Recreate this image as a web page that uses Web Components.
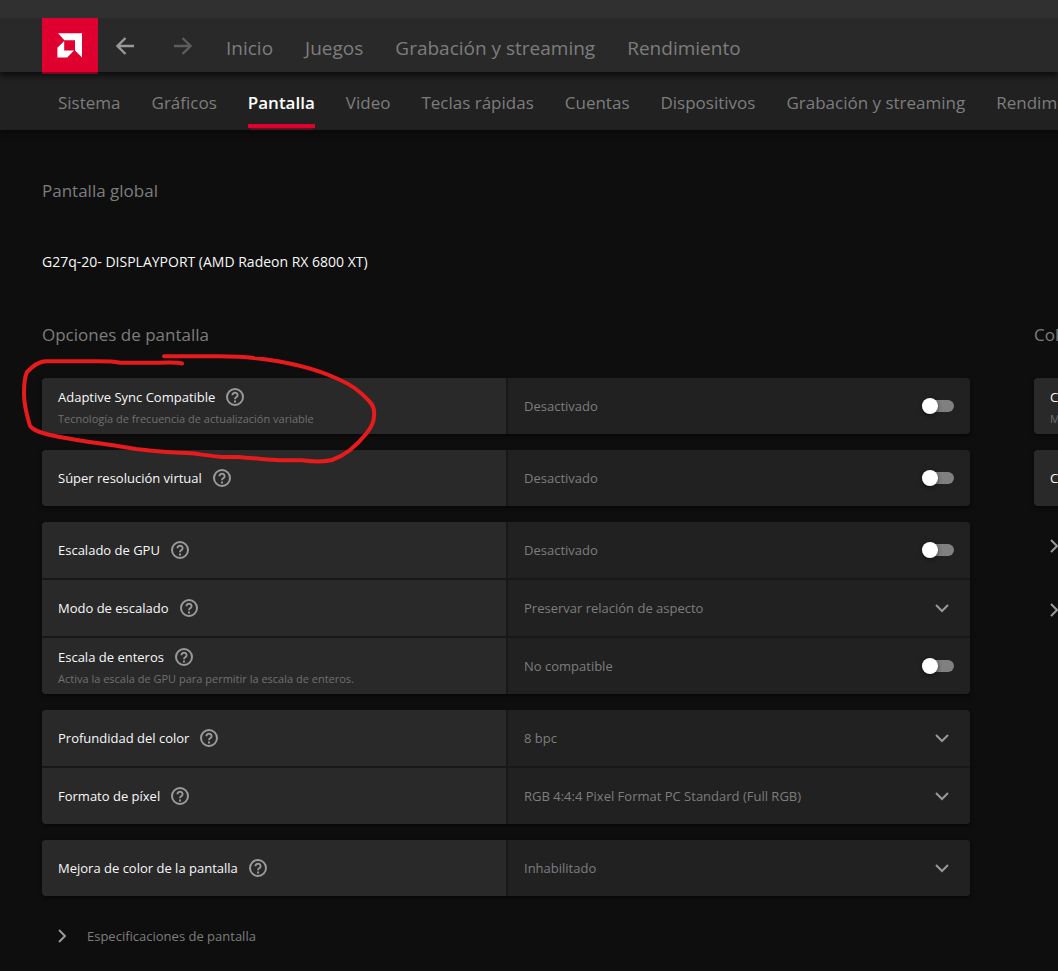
<!DOCTYPE html>
<html lang="es">
<head>
<meta charset="utf-8">
<meta name="viewport" content="width=device-width, initial-scale=1">
<title>AMD Software - Pantalla</title>
<style>
    :root {
        --red: #e00030;
        --text: #f8f8f8;
        --muted: #7d7d7d;
        --icon: #999;
        --card: #292929;
        --card-value: #212121;
        --line: #181818;
    }

    body {
        margin: 0;
        min-height: 100vh;
        background: #0e0e0e;
        color: var(--text);
        font-family: "Open Sans", "Noto Sans", sans-serif;
        font-size: 13px;
        overflow-x: hidden;
    }
</style>
</head>
<body>
<settings-app>
    <top-bar slot="bar">
        <a href="#inicio">Inicio</a>
        <a href="#juegos">Juegos</a>
        <a href="#grabacion">Grabación y streaming</a>
        <a href="#rendimiento">Rendimiento</a>
    </top-bar>
    <tab-bar slot="bar">
        <a href="#sistema">Sistema</a>
        <a href="#graficos">Gráficos</a>
        <a href="#pantalla" aria-current="page">Pantalla</a>
        <a href="#video">Video</a>
        <a href="#teclas">Teclas rápidas</a>
        <a href="#cuentas">Cuentas</a>
        <a href="#dispositivos">Dispositivos</a>
        <a href="#ajustes-grabacion">Grabación y streaming</a>
        <a href="#ajustes-rendimiento">Rendimiento</a>
    </tab-bar>

    <span slot="title">Pantalla global</span>
    <span slot="device">G27q-20- DISPLAYPORT (AMD Radeon RX 6800 XT)</span>

    <settings-column heading="Opciones de pantalla">
        <setting-card>
            <setting-row label="Adaptive Sync Compatible" hint="Tecnología de frecuencia de actualización variable" value="Desactivado"></setting-row>
        </setting-card>
        <setting-card>
            <setting-row label="Súper resolución virtual" value="Desactivado"></setting-row>
        </setting-card>
        <setting-card>
            <setting-row label="Escalado de GPU" value="Desactivado"></setting-row>
            <setting-row type="select" label="Modo de escalado" value="Preservar relación de aspecto"></setting-row>
            <setting-row label="Escala de enteros" hint="Activa la escala de GPU para permitir la escala de enteros." value="No compatible"></setting-row>
        </setting-card>
        <setting-card>
            <setting-row type="select" label="Profundidad del color" value="8 bpc"></setting-row>
            <setting-row type="select" label="Formato de píxel" value="RGB 4:4:4 Pixel Format PC Standard (Full RGB)"></setting-row>
        </setting-card>
        <setting-card>
            <setting-row type="select" label="Mejora de color de la pantalla" value="Inhabilitado"></setting-row>
        </setting-card>
        <expand-link>Especificaciones de pantalla</expand-link>
    </settings-column>

    <settings-column heading="Color">
        <setting-card>
            <setting-row label="Color" hint="Modo"></setting-row>
        </setting-card>
        <setting-card>
            <setting-row label="Color"></setting-row>
        </setting-card>
        <expand-link></expand-link>
        <expand-link></expand-link>
    </settings-column>

    <pen-mark slot="overlay"></pen-mark>
</settings-app>

<script>
    class SettingsApp extends HTMLElement {
        constructor() {
            super();
            this.attachShadow({ mode: 'open' });
            this.shadowRoot.innerHTML = `
                <style>
                    :host {
                        display: block;
                        position: relative;
                        overflow: hidden;
                    }

                    .title-strip {
                        height: 18px;
                        background: #303030;
                    }

                    main {
                        padding: 49px 0 8px 42px;
                    }

                    h1, h2 {
                        margin: 0;
                        font-weight: 400;
                    }

                    h1 {
                        font-size: 17px;
                        line-height: 24px;
                        color: var(--muted);
                    }

                    h2 {
                        margin: 49px 0 51px;
                        font-size: 14px;
                        line-height: 20px;
                    }

                    .columns {
                        display: grid;
                        grid-auto-flow: column;
                        grid-auto-columns: calc(100% - 88px);
                        gap: 64px;
                        align-items: start;
                    }
                </style>
                <div class="title-strip"></div>
                <slot name="bar"></slot>
                <main>
                    <h1><slot name="title"></slot></h1>
                    <h2><slot name="device"></slot></h2>
                    <div class="columns"><slot></slot></div>
                </main>
                <slot name="overlay"></slot>
            `;
        }
    }

    class TopBar extends HTMLElement {
        constructor() {
            super();
            this.attachShadow({ mode: 'open' });
            this.shadowRoot.innerHTML = `
                <style>
                    :host {
                        display: flex;
                        height: 54px;
                        padding-left: 42px;
                        background: #292929;
                        box-shadow: 0 4px 6px rgba(0, 0, 0, 0.6);
                        clip-path: inset(0 0 -12px 0);
                        position: relative;
                        z-index: 1;
                    }

                    .logo {
                        flex: none;
                        width: 56px;
                        height: 56px;
                        background: var(--red);
                        box-shadow: inset 0 -2px rgba(0, 0, 0, 0.4);
                    }

                    .arrows {
                        display: flex;
                        gap: 40px;
                        padding: 2px 34px 0 18px;
                    }

                    button {
                        padding: 0;
                        border: 0;
                        background: none;
                        color: var(--icon);
                    }

                    button:disabled {
                        color: #5c5c5c;
                    }

                    svg {
                        display: block;
                    }

                    nav {
                        display: flex;
                        gap: 32px;
                        padding-top: 6px;
                        line-height: 48px;
                    }

                    ::slotted(a) {
                        font-size: 19px;
                        color: var(--muted);
                        text-decoration: none;
                        white-space: nowrap;
                    }
                </style>
                <svg class="logo" viewBox="0 0 56 56" role="img" aria-label="AMD">
                    <path fill="#fff" d="M16 15.2h24v24.2l-7-7V22.2H22.4z"/>
                    <path fill="#fff" d="M22.2 23v9.6h9.8l-6.8 7H15.4v-9.8z"/>
                </svg>
                <div class="arrows">
                    <button type="button" aria-label="Atrás">
                        <svg width="18" height="18" viewBox="0 0 18 18" fill="none" stroke="currentColor" stroke-width="2.4"><path d="M18 9H2M9.500 1 1.500 9l8 8"/></svg>
                    </button>
                    <button type="button" aria-label="Adelante" disabled>
                        <svg width="18" height="18" viewBox="0 0 18 18" fill="none" stroke="currentColor" stroke-width="2.4"><path d="M0 9h16M8.500 1l8 8-8 8"/></svg>
                    </button>
                </div>
                <nav aria-label="Principal"><slot></slot></nav>
            `;
        }
    }

    class TabBar extends HTMLElement {
        constructor() {
            super();
            this.attachShadow({ mode: 'open' });
            this.shadowRoot.innerHTML = `
                <style>
                    :host {
                        display: block;
                        background: #212121;
                        box-shadow: 0 2px 6px rgba(0, 0, 0, 0.6);
                    }

                    nav {
                        display: flex;
                        gap: 31px;
                        height: 52px;
                        padding: 0 0 6px 58px;
                        line-height: 62px;
                    }

                    ::slotted(a) {
                        box-sizing: border-box;
                        height: 56px;
                        font-size: 17px;
                        color: var(--muted);
                        text-decoration: none;
                        white-space: nowrap;
                    }

                    ::slotted(a[aria-current]) {
                        color: #fff;
                        font-weight: 600;
                        background: linear-gradient(var(--red), var(--red)) bottom / 100% 4px no-repeat;
                        box-shadow: 0 3px 3px -2px rgba(224, 0, 48, 0.5);
                    }
                </style>
                <nav aria-label="Ajustes"><slot></slot></nav>
            `;
        }
    }

    class SettingsColumn extends HTMLElement {
        constructor() {
            super();
            this.attachShadow({ mode: 'open' });
        }

        connectedCallback() {
            this.shadowRoot.innerHTML = `
                <style>
                    :host {
                        display: flex;
                        flex-direction: column;
                        gap: 16px;
                    }

                    h3 {
                        margin: 0 0 15px;
                        font-size: 17px;
                        font-weight: 400;
                        line-height: 24px;
                        color: var(--muted);
                    }
                </style>
                <h3>${this.getAttribute('heading')}</h3>
                <slot></slot>
            `;
        }
    }

    class SettingCard extends HTMLElement {
        constructor() {
            super();
            this.attachShadow({ mode: 'open' });
            this.shadowRoot.innerHTML = `
                <style>
                    :host {
                        display: grid;
                        gap: 2px;
                        border-radius: 4px;
                        overflow: hidden;
                        background: var(--line);
                        box-shadow: 0 2px 4px rgba(0, 0, 0, 0.5);
                    }
                </style>
                <slot></slot>
            `;
        }
    }

    class SettingRow extends HTMLElement {
        constructor() {
            super();
            this.attachShadow({ mode: 'open' });
        }

        connectedCallback() {
            this.render();
        }

        renderControl() {
            const value = this.getAttribute('value') || '';

            if (this.getAttribute('type') === 'select') {
                return `
                    <select id="control"><option>${value}</option></select>
                    <svg class="chevron" width="24" height="24" viewBox="0 0 24 24" fill="none" stroke="currentColor" stroke-width="2" aria-hidden="true"><path d="m6 9 6 6 6-6"/></svg>
                `;
            }
            return `
                <span>${value}</span>
                <input id="control" type="checkbox" role="switch">
            `;
        }

        render() {
            const hint = this.getAttribute('hint');

            this.shadowRoot.innerHTML = `
                <style>
                    :host {
                        display: grid;
                        grid-template-columns: 50% 1fr;
                        gap: 2px;
                        height: 56px;
                        line-height: 22px;
                        white-space: nowrap;
                    }

                    .name, .value {
                        box-sizing: border-box;
                        min-width: 0;
                        padding: 0 16px;
                    }

                    .name {
                        display: flex;
                        flex-direction: column;
                        justify-content: center;
                        background: var(--card);
                    }

                    .name.with-hint {
                        justify-content: flex-start;
                        padding-top: 8px;
                    }

                    .head {
                        display: flex;
                        align-items: center;
                        gap: 11px;
                    }

                    .help {
                        padding: 0;
                        border: 0;
                        background: none;
                        color: var(--icon);
                    }

                    svg {
                        display: block;
                    }

                    .hint {
                        font-size: 11px;
                        color: #707070;
                    }

                    .value {
                        display: grid;
                        grid-template-columns: 1fr auto;
                        align-items: center;
                        background: var(--card-value);
                        color: var(--muted);
                    }

                    select {
                        grid-area: 1 / 1 / 2 / 3;
                        width: 100%;
                        height: 40px;
                        margin: 0;
                        padding: 0;
                        border: 0;
                        appearance: none;
                        background: none;
                        color: inherit;
                        font: inherit;
                    }

                    .chevron {
                        grid-area: 1 / 2;
                        color: var(--icon);
                        pointer-events: none;
                    }

                    input {
                        appearance: none;
                        display: flex;
                        align-items: center;
                        width: 32px;
                        height: 12px;
                        margin: 0;
                        background: #808080;
                        border-radius: 6px;
                    }

                    input::before {
                        content: "";
                        flex: none;
                        width: 16px;
                        height: 16px;
                        border-radius: 50%;
                        background: #fff;
                        box-shadow: 0 1px 4px rgba(0, 0, 0, 0.6);
                    }

                    input:checked {
                        justify-content: flex-end;
                    }
                </style>
                <div class="name ${hint ? 'with-hint' : ''}">
                    <div class="head">
                        <label for="control">${this.getAttribute('label')}</label>
                        <button class="help" type="button" aria-label="Ayuda">
                            <svg width="18" height="18" viewBox="0 0 18 18" fill="none" stroke="currentColor" stroke-width="2">
                                <circle cx="9" cy="9" r="8"/>
                                <path stroke-width="1.900" d="M6.400 7.200a2.600 2.400 0 1 1 4.200 1.800C9.600 9.800 9 10 9 11.300"/>
                                <path d="M9 12.400v2"/>
                            </svg>
                        </button>
                    </div>
                    ${hint ? `<div class="hint">${hint}</div>` : ''}
                </div>
                <div class="value">${this.renderControl()}</div>
            `;
        }
    }

    class ExpandLink extends HTMLElement {
        constructor() {
            super();
            this.attachShadow({ mode: 'open' });
            this.shadowRoot.innerHTML = `
                <style>
                    :host {
                        display: block;
                    }

                    button {
                        display: flex;
                        align-items: center;
                        gap: 20px;
                        height: 48px;
                        padding: 0 16px;
                        border: 0;
                        background: none;
                        color: var(--muted);
                        font: inherit;
                        white-space: nowrap;
                    }

                    svg {
                        color: var(--icon);
                    }
                </style>
                <button type="button" aria-expanded="false">
                    <svg width="9" height="14" viewBox="0 0 9 14" fill="none" stroke="currentColor" stroke-width="2" aria-hidden="true"><path d="m1 1 6 6-6 6"/></svg>
                    <slot></slot>
                </button>
            `;
        }
    }

    // hand-drawn stroke around the first option
    class PenMark extends HTMLElement {
        constructor() {
            super();
            this.attachShadow({ mode: 'open' });
            this.shadowRoot.innerHTML = `
                <style>
                    :host {
                        position: absolute;
                        left: 20px;
                        top: 350px;
                        z-index: 2;
                        pointer-events: none;
                    }

                    svg {
                        display: block;
                    }
                </style>
                <svg width="360" height="116" viewBox="20 350 360 116" fill="none" stroke="#e71a1c" stroke-width="4" stroke-linecap="round" stroke-linejoin="round" aria-hidden="true">
                    <path d="M182 363.500C176 362 170 362.700 160 362.700H120C113 361.300 106 361.300 98 361.300H46C38 361.300 32 367 27 372C24 378 24 386 24 394C24 405 27 416 30 426C34 431 42 433 50 435C72 440 106 444 136 449C162 452 178 453 192 453.300C205 455 213 456.300 222 457H238C252 458.500 266 459 280 460.300H302C314 462 323 462 332 460C346 455 358 444 366 434C371 428 374 423 374 416C375 409 373 405 369 401C361 392 350 384 338 379C312 367 282 361 254 358C241 356.300 230 356.300 218 356.300H164"/>
                </svg>
            `;
        }
    }

    customElements.define('settings-app', SettingsApp);
    customElements.define('top-bar', TopBar);
    customElements.define('tab-bar', TabBar);
    customElements.define('settings-column', SettingsColumn);
    customElements.define('setting-card', SettingCard);
    customElements.define('setting-row', SettingRow);
    customElements.define('expand-link', ExpandLink);
    customElements.define('pen-mark', PenMark);
</script>
</body>
</html>
